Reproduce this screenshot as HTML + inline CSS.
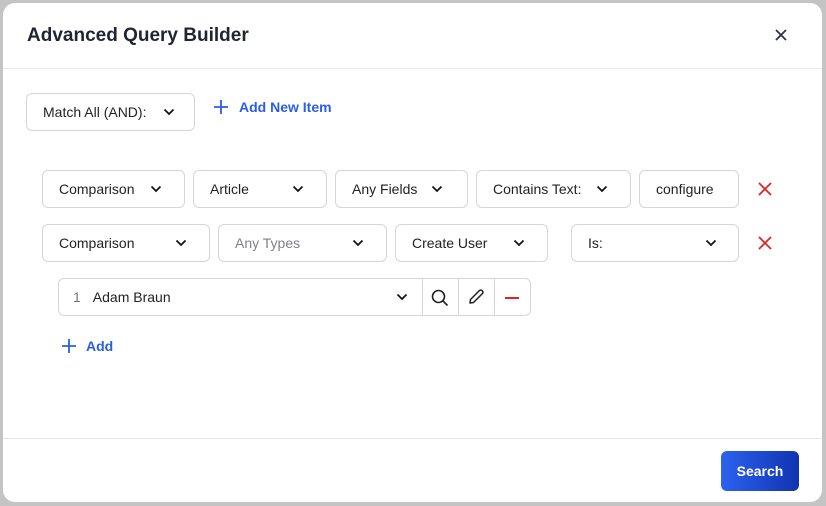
<!DOCTYPE html>
<html><head><style>
*{box-sizing:border-box;margin:0;padding:0}
body{width:826px;height:506px;background:#c4c4c4;font-family:"Liberation Sans",sans-serif;position:relative;overflow:hidden}
.dlg{position:absolute;left:3px;top:3px;width:819px;height:499px;background:#fff;border-radius:12px}
.a{position:absolute}
.box{position:absolute;border:1px solid #d3d6df;border-radius:6px;height:38px;font-size:14px;color:#222;display:flex;align-items:center;padding-left:16px}
.chev{position:absolute;top:14px;width:12px;height:8px}
.title{left:24px;top:22px;font-size:19px;font-weight:bold;color:#1f2533}
.line{position:absolute;left:0;width:819px;height:1px;background:#e6e8ec}
.blue{color:#2a5ee8;font-weight:bold;font-size:14px}
.x{position:absolute;width:14px;height:14px}
</style></head><body>
<div class="dlg">
<div class="a title">Advanced Query Builder</div>
<svg class="a" style="left:771px;top:25px" width="14" height="14" viewBox="0 0 14 14"><path d="M2 2L12 12M12 2L2 12" stroke="#2b3345" stroke-width="1.8"/></svg>
<div class="line" style="top:65px"></div>

<div class="box" style="left:23px;top:90px;width:169px;height:38px">Match All (AND):<svg class="chev" style="left:136px" viewBox="0 0 12 8"><path d="M1.5 1.5L6 6L10.5 1.5" fill="none" stroke="#111" stroke-width="1.7"/></svg></div>
<svg class="a" style="left:211px;top:97px" width="14" height="14"><path d="M7 0V14M0 7H14" stroke="#2a5ee8" stroke-width="1.8"/></svg>
<div class="a blue" style="left:236px;top:96px">Add New Item</div>

<div class="box" style="left:39px;top:167px;width:143px">Comparison<svg class="chev" style="left:107px" viewBox="0 0 12 8"><path d="M1.5 1.5L6 6L10.5 1.5" fill="none" stroke="#111" stroke-width="1.7"/></svg></div>
<div class="box" style="left:190px;top:167px;width:134px">Article<svg class="chev" style="left:98px" viewBox="0 0 12 8"><path d="M1.5 1.5L6 6L10.5 1.5" fill="none" stroke="#111" stroke-width="1.7"/></svg></div>
<div class="box" style="left:332px;top:167px;width:133px">Any Fields<svg class="chev" style="left:95px" viewBox="0 0 12 8"><path d="M1.5 1.5L6 6L10.5 1.5" fill="none" stroke="#111" stroke-width="1.7"/></svg></div>
<div class="box" style="left:473px;top:167px;width:155px">Contains Text:<svg class="chev" style="left:119px" viewBox="0 0 12 8"><path d="M1.5 1.5L6 6L10.5 1.5" fill="none" stroke="#111" stroke-width="1.7"/></svg></div>
<div class="box" style="left:636px;top:167px;width:100px">configure</div>
<svg class="x" style="left:755px;top:179px" viewBox="0 0 14 14"><path d="M1 1L13 13M13 1L1 13" stroke="#e02424" stroke-width="1.8"/></svg>

<div class="box" style="left:39px;top:221px;width:168px">Comparison<svg class="chev" style="left:132px" viewBox="0 0 12 8"><path d="M1.5 1.5L6 6L10.5 1.5" fill="none" stroke="#111" stroke-width="1.7"/></svg></div>
<div class="box" style="left:215px;top:221px;width:169px;color:#7a8090">Any Types<svg class="chev" style="left:133px" viewBox="0 0 12 8"><path d="M1.5 1.5L6 6L10.5 1.5" fill="none" stroke="#111" stroke-width="1.7"/></svg></div>
<div class="box" style="left:392px;top:221px;width:153px">Create User<svg class="chev" style="left:117px" viewBox="0 0 12 8"><path d="M1.5 1.5L6 6L10.5 1.5" fill="none" stroke="#111" stroke-width="1.7"/></svg></div>
<div class="box" style="left:568px;top:221px;width:168px">Is:<svg class="chev" style="left:133px" viewBox="0 0 12 8"><path d="M1.5 1.5L6 6L10.5 1.5" fill="none" stroke="#111" stroke-width="1.7"/></svg></div>
<svg class="x" style="left:755px;top:233px" viewBox="0 0 14 14"><path d="M1 1L13 13M13 1L1 13" stroke="#e02424" stroke-width="1.8"/></svg>

<div class="box" style="left:55px;top:275px;width:473px;padding-left:14px"><span style="color:#777;margin-right:12px">1</span>Adam Braun
<svg class="chev" style="left:337px" viewBox="0 0 12 8"><path d="M1.5 1.5L6 6L10.5 1.5" fill="none" stroke="#111" stroke-width="1.7"/></svg>
<div class="a" style="left:363px;top:0;width:1px;height:36px;background:#d3d6df"></div>
<div class="a" style="left:399px;top:0;width:1px;height:36px;background:#d3d6df"></div>
<div class="a" style="left:435px;top:0;width:1px;height:36px;background:#d3d6df"></div>
<svg class="a" style="left:372px;top:10px" width="18" height="18" viewBox="0 0 18 18"><circle cx="7.5" cy="7.5" r="6" fill="none" stroke="#222" stroke-width="1.6"/><path d="M12 12L16.5 16.5" stroke="#222" stroke-width="1.6"/></svg>
<svg class="a" style="left:408px;top:9px" width="18" height="18" viewBox="0 0 18 18"><path d="M3 15L3.5 11.5L12.5 2.5Q14 1.5 15.5 3Q16.5 4.5 15.5 5.5L6.5 14.5Z" fill="none" stroke="#222" stroke-width="1.5" stroke-linejoin="round"/></svg>
<div class="a" style="left:446px;top:18px;width:14px;height:2px;background:#e02424"></div>
</div>

<svg class="a" style="left:59px;top:336px" width="14" height="14"><path d="M7 0V14M0 7H14" stroke="#2a5ee8" stroke-width="1.8"/></svg>
<div class="a blue" style="left:83px;top:335px">Add</div>

<div class="line" style="top:435px"></div>
<div class="a" style="left:718px;top:448px;width:78px;height:40px;border-radius:6px;background:linear-gradient(90deg,#2c62f0,#1034b0);color:#fff;font-weight:bold;font-size:14px;display:flex;align-items:center;justify-content:center">Search</div>
</div>
</body></html>
